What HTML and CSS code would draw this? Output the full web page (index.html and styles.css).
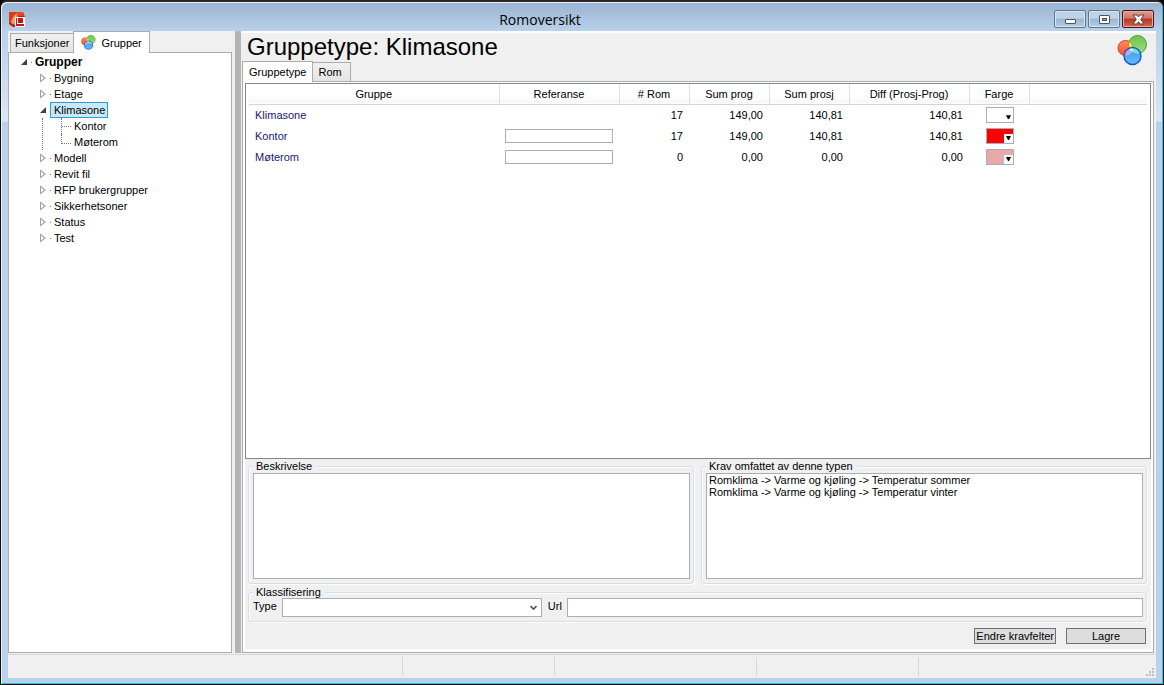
FILE: index.html
```html
<!DOCTYPE html>
<html lang="no">
<head>
<meta charset="utf-8">
<meta name="viewport" content="width=device-width, initial-scale=1">
<title>Romoversikt</title>
<link rel="stylesheet" href="styles.css">
</head>
<body>
<svg class="defs" aria-hidden="true">
  <defs>
    <linearGradient id="gRed" x1="0" y1="0" x2="0" y2="1"><stop offset="0" stop-color="#ff8d6a"/><stop offset="1" stop-color="#f4502c"/></linearGradient>
    <linearGradient id="gGreen" x1="0" y1="0" x2="0" y2="1"><stop offset="0" stop-color="#6cc452"/><stop offset="1" stop-color="#a0dc7c"/></linearGradient>
    <linearGradient id="gBlue" x1="0" y1="0" x2="0" y2="1"><stop offset="0" stop-color="#3d96ee"/><stop offset="1" stop-color="#66bcff"/></linearGradient>
    <symbol id="groups" viewBox="0 0 31 31">
      <circle cx="8.500" cy="13" r="7.500" fill="url(#gRed)" stroke="#d5401f"/>
      <circle cx="20.500" cy="9.500" r="9" fill="url(#gGreen)" stroke="#45a83a"/>
      <path d="M12.050 6.390A7.500 7.500 0 0 1 15.050 16.670A9 9 0 0 1 12.050 6.390Z" fill="#f5e02e" stroke="#b98a1f" stroke-width=".7"/>
      <circle cx="15.500" cy="21" r="8.500" fill="url(#gBlue)"/>
      <path d="M15.980 12.510A7.500 7.500 0 0 1 7.020 20.350A8.500 8.500 0 0 1 15.980 12.510Z" fill="#c0a8dc"/>
      <path d="M12.270 13.140A8.500 8.500 0 0 1 23.450 18A9 9 0 0 1 12.270 13.140Z" fill="#74e4d4"/>
      <path d="M12.270 13.140A8.500 8.500 0 0 1 15.980 12.510Q16.500 14.500 15.050 16.670Q13 15.500 12.270 13.140Z" fill="#e8f4f0"/>
      <circle cx="15.500" cy="21" r="8.500" fill="none" stroke="#1555c8" stroke-width="1.400"/>
    </symbol>
  </defs>
</svg>
<div class="window">
  <header class="titlebar">
    <svg class="app-icon" viewBox="0 0 17 17" aria-hidden="true">
      <path d="M1 1H14L16 6V16H4L0 13V2Z" fill="#b81c16"/>
      <path d="M0 2L1 1H9Q4 4 3 12L0 12Z" fill="#d83a24"/>
      <path d="M2 12Q3 4 10 1L12 3Q7 6 6 14Z" fill="#f49a5c"/>
      <path d="M9 1H14L15 5Q10 4 7 6Q8 3 9 1Z" fill="#e8472c"/>
      <rect x="6.500" y="6.500" width="9" height="9" fill="#c01812" stroke="#fff"/>
      <rect x="8.500" y="6.500" width="6" height="6" fill="none" stroke="#fff"/>
    </svg>
    <h1 class="window-title">Romoversikt</h1>
    <div class="window-buttons">
      <button class="winbtn" type="button" aria-label="Minimer"><svg viewBox="0 0 13 11" aria-hidden="true"><rect x="1.500" y="5.500" width="10" height="4" rx=".5" fill="#fff" stroke="#4b5362"/></svg></button>
      <button class="winbtn" type="button" aria-label="Maksimer"><svg viewBox="0 0 13 11" aria-hidden="true"><rect x="1.500" y="1.500" width="10" height="8" rx=".5" fill="#fff" stroke="#4b5362"/><rect x="4.500" y="4.500" width="4" height="2" fill="#8ba6c6" stroke="#4b5362"/></svg></button>
      <button class="winbtn winbtn-close" type="button" aria-label="Lukk"><svg viewBox="0 0 13 11" aria-hidden="true"><path d="M1 1H5L6.500 3L8 1H12L8.700 5.300L12 10H8L6.500 7.700L5 10H1L4.300 5.300Z" fill="#fff" stroke="#54404a"/></svg></button>
    </div>
  </header>

  <main class="client">
    <aside class="sidebar">
      <div class="tabs side-tabs" role="tablist">
        <button class="tab" type="button" role="tab" aria-selected="false">Funksjoner</button>
        <button class="tab tab-active" type="button" role="tab" aria-selected="true"><svg class="tab-icon" aria-hidden="true"><use href="#groups"/></svg>Grupper</button>
      </div>
      <nav class="tree" aria-label="Grupper">
        <div class="node node-root"><button class="toggle open" type="button" aria-label="Skjul Grupper"></button><a class="node-link" href="#grupper">Grupper</a></div>
        <ul class="branch">
          <li><div class="node"><button class="toggle" type="button" aria-label="Vis Bygning"></button><a class="node-link" href="#bygning">Bygning</a></div></li>
          <li><div class="node"><button class="toggle" type="button" aria-label="Vis Etage"></button><a class="node-link" href="#etage">Etage</a></div></li>
          <li><div class="node"><button class="toggle open" type="button" aria-label="Skjul Klimasone"></button><a class="node-link selected" href="#klimasone">Klimasone</a></div>
            <ul class="leaves">
              <li class="leaf"><a class="node-link" href="#kontor">Kontor</a></li>
              <li class="leaf"><a class="node-link" href="#moterom">Møterom</a></li>
            </ul>
          </li>
          <li><div class="node"><button class="toggle" type="button" aria-label="Vis Modell"></button><a class="node-link" href="#modell">Modell</a></div></li>
          <li><div class="node"><button class="toggle" type="button" aria-label="Vis Revit fil"></button><a class="node-link" href="#revit">Revit fil</a></div></li>
          <li><div class="node"><button class="toggle" type="button" aria-label="Vis RFP brukergrupper"></button><a class="node-link" href="#rfp">RFP brukergrupper</a></div></li>
          <li><div class="node"><button class="toggle" type="button" aria-label="Vis Sikkerhetsoner"></button><a class="node-link" href="#sikkerhet">Sikkerhetsoner</a></div></li>
          <li><div class="node"><button class="toggle" type="button" aria-label="Vis Status"></button><a class="node-link" href="#status">Status</a></div></li>
          <li><div class="node"><button class="toggle" type="button" aria-label="Vis Test"></button><a class="node-link" href="#test">Test</a></div></li>
        </ul>
      </nav>
    </aside>
    <div class="splitter"></div>

    <section class="detail">
      <div class="detail-head">
        <h2 class="heading">Gruppetype: Klimasone</h2>
        <svg class="groups-icon" aria-hidden="true"><use href="#groups"/></svg>
      </div>
      <div class="tabs detail-tabs" role="tablist">
        <button class="tab tab-active" type="button" role="tab" aria-selected="true">Gruppetype</button>
        <button class="tab" type="button" role="tab" aria-selected="false">Rom</button>
      </div>
      <div class="page">
        <div class="page-inner">
          <div class="listview">
            <table class="grid">
              <colgroup><col class="c-name"><col class="c-ref"><col class="c-rooms"><col class="c-sum"><col class="c-sum"><col class="c-ref"><col class="c-color"><col></colgroup>
              <thead>
                <tr><th>Gruppe</th><th>Referanse</th><th># Rom</th><th>Sum prog</th><th>Sum prosj</th><th>Diff (Prosj-Prog)</th><th>Farge</th><td></td></tr>
              </thead>
              <tbody>
                <tr><td class="name">Klimasone</td><td></td><td class="num">17</td><td class="num">149,00</td><td class="num">140,81</td><td class="num">140,81</td><td class="color"><button class="swatch" type="button" aria-label="Farge Klimasone"><span class="drop"></span></button></td><td></td></tr>
                <tr><td class="name">Kontor</td><td class="ref"><input class="field" type="text" aria-label="Referanse Kontor"></td><td class="num">17</td><td class="num">149,00</td><td class="num">140,81</td><td class="num">140,81</td><td class="color"><button class="swatch swatch-red" type="button" aria-label="Farge Kontor"><span class="drop"></span></button></td><td></td></tr>
                <tr><td class="name">Møterom</td><td class="ref"><input class="field" type="text" aria-label="Referanse Møterom"></td><td class="num">0</td><td class="num">0,00</td><td class="num">0,00</td><td class="num">0,00</td><td class="color"><button class="swatch swatch-pink" type="button" aria-label="Farge Møterom"><span class="drop"></span></button></td><td></td></tr>
              </tbody>
            </table>
          </div>
          <div class="boxes">
            <fieldset class="group">
              <legend>Beskrivelse</legend>
              <textarea class="field memo" aria-label="Beskrivelse"></textarea>
            </fieldset>
            <fieldset class="group">
              <legend>Krav omfattet av denne typen</legend>
              <ul class="field memo list">
                <li>Romklima -&gt; Varme og kjøling -&gt; Temperatur sommer</li>
                <li>Romklima -&gt; Varme og kjøling -&gt; Temperatur vinter</li>
              </ul>
            </fieldset>
          </div>
          <fieldset class="group classify">
            <legend>Klassifisering</legend>
            <div class="classify-row">
              <label for="type">Type</label>
              <span class="combo">
                <select class="field" id="type"><option></option></select>
                <svg viewBox="0 0 7 6" aria-hidden="true"><path d="M.5 1L3.500 4L6.500 1" fill="none" stroke="#555" stroke-width="1.600"/></svg>
              </span>
              <label for="url">Url</label>
              <input class="field url" id="url" type="text">
            </div>
          </fieldset>
          <div class="actions">
            <button class="btn" type="button">Endre kravfelter</button>
            <button class="btn" type="button">Lagre</button>
          </div>
        </div>
      </div>
    </section>
  </main>
  <footer class="statusbar">
    <span></span><span></span><span></span><span></span><span></span>
    <svg class="grip" viewBox="0 0 8 8" aria-hidden="true"><path d="M6 0h2v2h-2zM3 3h2v2h-2zM6 3h2v2h-2zM0 6h2v2h-2zM3 6h2v2h-2zM6 6h2v2h-2z" fill="#bdbdbd"/></svg>
  </footer>
</div>
</body>
</html>
```
FILE: styles.css
```css
* { box-sizing: border-box; }

body {
  margin: 0;
  background: #000;
  color: #000;
  font: 11px/12px "Liberation Sans", Arial, sans-serif;
}

button, input, select, textarea { font: inherit; color: inherit; }
ul { margin: 0; padding: 0; list-style: none; }
.defs { position: absolute; width: 0; height: 0; }

/* Window frame */
.window {
  display: flex;
  flex-direction: column;
  height: 100vh;
  padding: 0 6px 6px;
  border: 1px solid #111;
  border-top: 2px solid #2b2528;
  border-radius: 7px 7px 0 0;
  background: linear-gradient(#99b4d1 0, #b9d1ea 29px, #dae7f5 119px, #b9d1ea 120px);
  box-shadow: inset 1px 1px #e8f1fa, inset -1px -1px #27c4e0;
}

.titlebar {
  display: grid;
  grid-template-columns: 17px 1fr 100px;
  flex: none;
  height: 29px;
  padding: 0 3px 0 2px;
}
.app-icon { width: 17px; height: 17px; margin-top: 9px; }
.window-title {
  margin: 0;
  padding-top: 7px;
  text-align: center;
  font: 14px/22px "Open Sans", sans-serif;
}
.window-buttons { display: flex; justify-content: flex-end; gap: 2px; padding-top: 8px; }
.winbtn {
  display: grid;
  place-items: center;
  flex: none;
  width: 32px;
  height: 18px;
  padding: 0;
  border: 1px solid #5d7690;
  border-radius: 2px;
  background: linear-gradient(#bfd3e8 0 45%, #9bb5d2 50%, #b5cde6);
  box-shadow: inset 0 0 0 1px #d7e4f2;
}
.winbtn svg { width: 13px; height: 11px; }
.winbtn-close {
  border-color: #471420;
  background: linear-gradient(#e0a090 0, #d07464 45%, #b83626 50%, #cf6a50);
  box-shadow: inset 0 0 0 1px #e8aaa0;
}

/* Client area */
.client {
  display: flex;
  flex: 1;
  min-height: 0;
  margin: 0 1px;
  padding-bottom: 1px;
  background: #f0f0f0;
}
.sidebar { display: flex; flex-direction: column; flex: none; width: 227px; padding-right: 3px; }
.splitter { flex: none; width: 6px; background: #b4b4b4; }

.tabs { display: flex; align-items: flex-end; flex: none; }
.tab {
  height: 19px;
  padding: 0 5px;
  border: 1px solid #acacac;
  border-bottom: 0;
  background: linear-gradient(#f0f0f0, #e5e5e5);
  white-space: nowrap;
}
.tab-active {
  display: flex;
  align-items: center;
  z-index: 1;
  height: 22px;
  margin-bottom: -1px;
  background: #fff;
}
.side-tabs { padding-left: 2px; }
.side-tabs .tab { padding: 0 4px; }
.side-tabs .tab-active { margin-left: -1px; padding: 0 7px; gap: 5px; }
.tab-icon { width: 15px; height: 15px; }

/* Tree */
.tree {
  flex: 1;
  padding: 1px 0 0 12px;
  border: 1px solid #acacac;
  background: #fff;
}
.node { display: flex; align-items: center; height: 16px; }
.node-link {
  margin-left: -1px;
  padding: 1px 3px;
  border: 1px solid transparent;
  color: inherit;
  line-height: 12px;
  text-decoration: none;
  white-space: nowrap;
}
.node-root .node-link { font-weight: bold; font-size: 12px; }
.node .selected { padding: 1px 2px 1px 3px; border-color: #26a0da; background: #cbe8f6; }
.toggle {
  display: grid;
  grid-template-columns: 8px 4px;
  align-items: center;
  width: 11px;
  height: 16px;
  padding: 0;
  border: 0;
  background: none;
}
.toggle::before {
  content: "";
  width: 6px;
  height: 9px;
  background: #a0a0a0;
  clip-path: polygon(0 0, 100% 50%, 0 100%, 0 0, 1px 2px, 1px 7px, 4px 50%, 1px 2px);
}
.toggle.open::before {
  height: 6px;
  background: #404040;
  clip-path: polygon(100% 0, 100% 100%, 0 100%);
}
.toggle::after { content: ""; width: 1px; height: 1px; margin-left: 2px; background: #777; }
.branch { padding-left: 19px; }
.leaves { margin-left: 2px; padding-left: 18px; border-left: 1px dotted #777; }
.leaf { display: flex; align-items: center; height: 16px; }
.leaf::before {
  content: "";
  align-self: flex-start;
  width: 9px;
  height: 9px;
  border: dotted #777;
  border-width: 0 0 1px 1px;
}
.leaf:first-child::before { align-self: stretch; height: 16px; border-bottom: 0; background: linear-gradient(90deg, #777 50%, transparent 0) 0 8px / 2px 1px repeat-x; }

/* Detail pane */
.detail { display: flex; flex-direction: column; flex: 1; min-width: 0; border-top: 2px solid #fff; padding: 0 2px 0 1px; }
.detail-head { display: flex; justify-content: space-between; flex: none; height: 28px; padding: 0 6px 0 5px; }
.heading { margin: 0; font: 24px/28px "Liberation Sans", Arial, sans-serif; }
.groups-icon { flex: none; width: 31px; height: 31px; margin-top: 2px; }
.detail-tabs { height: 20px; }
.detail-tabs .tab-active { height: 21px; padding: 0 6px; }
.detail-tabs .tab { min-width: 39px; text-align: left; }
.detail-tabs .tab:not(.tab-active) { margin-left: -1px; }

.page { display: flex; flex: 1; min-height: 0; padding: 1px 2px 3px; border: 1px solid #acacac; background: #fff; }
.page-inner { display: flex; flex-direction: column; flex: 1; min-width: 0; background: #f0f0f0; padding-bottom: 5px; }

.listview { flex: 1; min-height: 0; padding: 0 3px; border: 1px solid #828790; background: #fff; }
.grid { width: 100%; border-collapse: collapse; table-layout: fixed; }
.grid tr { height: 21px; }
.grid thead tr { height: 20px; border-bottom: 1px solid #d5d5d5; background: linear-gradient(#fff 60%, #f6f7f8); }
.grid th { padding: 0; border-right: 1px solid #dedfe1; font-weight: normal; }
.grid td { padding: 0 6px; }
.grid .num { text-align: right; }
.grid .name { color: #191970; }
.grid .ref { padding: 0 6px; }
.grid .color { padding: 0 17px; }
.c-name { width: 250px; }
.c-ref { width: 120px; }
.c-rooms { width: 70px; }
.c-sum { width: 80px; }
.c-color { width: 60px; }

.field { display: block; width: 100%; margin: 0; padding: 0 3px; border: 1px solid #abadb3; border-radius: 0; background: #fff; }
.grid .field { height: 14px; }
.swatch {
  display: flex;
  align-items: flex-end;
  justify-content: flex-end;
  width: 28px;
  height: 16px;
  padding: 0;
  border: 1px solid #abadb3;
  background: #fff;
}
.swatch-red { background: #f00; }
.swatch-pink { background: #e6aaaa; }
.drop { display: grid; place-items: center; width: 9px; height: 9px; background: #fff; }
.drop::before { content: ""; width: 5px; height: 4px; background: #000; clip-path: polygon(0 0, 100% 0, 60% 100%, 40% 100%); }

/* Group boxes */
.boxes { display: grid; grid-template-columns: 1fr 1fr; gap: 7px; flex: none; padding: 1px 4px 0 3px; }
.group {
  min-width: 0;
  margin: 0;
  padding: 1px 3px 4px 4px;
  border: 1px solid #d5dfe5;
  border-radius: 3px;
  box-shadow: inset 1px 1px #fff, 1px 1px #fff;
}
.group legend { padding: 0 4px 0 3px; background: #f0f0f0; }
.memo { height: 106px; resize: none; }
.list { padding: 0 2px; }
.classify { flex: none; margin: 2px 4px 0 3px; padding: 0 3px 4px 4px; }
.classify-row { display: flex; align-items: flex-start; }
.classify-row label { padding-top: 2px; }
.classify-row .field { height: 19px; }
.combo { display: grid; flex: none; width: 260px; margin: 0 6px 0 5px; }
.combo select { grid-area: 1 / 1; appearance: none; }
.combo svg { grid-area: 1 / 1; place-self: center end; width: 7px; height: 6px; margin-right: 5px; pointer-events: none; }
.classify-row .url { flex: 1; min-width: 0; margin-left: 5px; }

.actions { display: flex; justify-content: flex-end; gap: 10px; flex: none; padding: 6px 5px 0; }
.btn { min-width: 80px; height: 16px; padding: 0 1px; border: 1px solid #707070; background: #ddd; line-height: 12px; white-space: nowrap; }

/* Status bar */
.statusbar {
  display: grid;
  grid-template-columns: 395px 152px 202px 162px 1fr 8px;
  flex: none;
  height: 24px;
  margin: 0 1px;
  padding: 2px 2px 2px 0;
  border-top: 1px solid #d7d7d7;
  background: #f0f0f0;
}
.statusbar span { border-right: 1px solid #d7d7d7; }
.statusbar span:nth-child(5) { border: 0; }
.grip { align-self: end; width: 8px; height: 8px; }
```
